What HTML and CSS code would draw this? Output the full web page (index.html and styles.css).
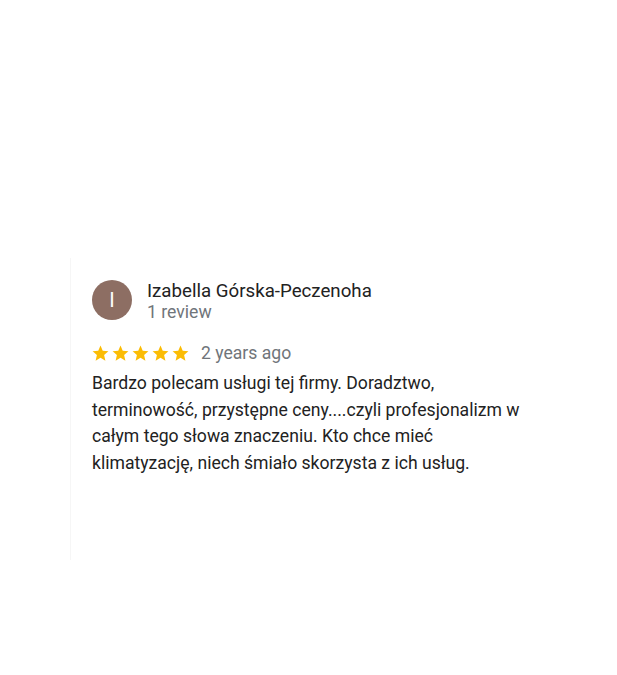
FILE: index.html
```html
<!DOCTYPE html>
<html lang="pl">
<head>
<meta charset="utf-8">
<link rel="stylesheet" href="styles.css">
</head>
<body>
<div class="page">
  <div class="card">
    <div class="author">
      <div class="avatar">I</div>
      <div class="meta">
        <div class="name">Izabella Górska-Peczenoha</div>
        <div class="count">1 review</div>
      </div>
    </div>
    <div class="rating">
      <div class="stars">
        <svg viewBox="0 0 24 24"><path d="M12 17.27L18.18 21l-1.64-7.03L22 9.24l-7.19-.61L12 2 9.19 8.63 2 9.24l5.46 4.73L5.82 21z"/></svg>
        <svg viewBox="0 0 24 24"><path d="M12 17.27L18.18 21l-1.64-7.03L22 9.24l-7.19-.61L12 2 9.19 8.63 2 9.24l5.46 4.73L5.82 21z"/></svg>
        <svg viewBox="0 0 24 24"><path d="M12 17.27L18.18 21l-1.64-7.03L22 9.24l-7.19-.61L12 2 9.19 8.63 2 9.24l5.46 4.73L5.82 21z"/></svg>
        <svg viewBox="0 0 24 24"><path d="M12 17.27L18.18 21l-1.64-7.03L22 9.24l-7.19-.61L12 2 9.19 8.63 2 9.24l5.46 4.73L5.82 21z"/></svg>
        <svg viewBox="0 0 24 24"><path d="M12 17.27L18.18 21l-1.64-7.03L22 9.24l-7.19-.61L12 2 9.19 8.63 2 9.24l5.46 4.73L5.82 21z"/></svg>
      </div>
      <span class="date">2 years ago</span>
    </div>
    <p class="text">Bardzo polecam usługi tej firmy. Doradztwo, terminowość, przystępne ceny....czyli profesjonalizm w całym tego słowa znaczeniu. Kto chce mieć klimatyzację, niech śmiało skorzysta z ich usług.</p>
  </div>
</div>
</body>
</html>
```
FILE: styles.css
```css
html, body {
  margin: 0;
  padding: 0;
  background: #fff;
}
body {
  font-family: Roboto, "Liberation Sans", Arial, sans-serif;
  color: #222;
}
.page {
  width: 617px;
  height: 675px;
  padding: 258px 0 0 70px;
  box-sizing: border-box;
}
.card {
  width: 470px;
  height: 302px;
  border-left: 1px solid #f6f6f6;
  padding: 20px 0 0 21px;
  box-sizing: border-box;
}
.author {
  display: flex;
  align-items: center;
  gap: 15px;
}
.avatar {
  width: 40px;
  height: 40px;
  border-radius: 50%;
  background: #8d6e63;
  color: #fff;
  font-size: 20px;
  display: flex;
  align-items: center;
  justify-content: center;
  flex: none;
}
.meta {
  display: flex;
  flex-direction: column;
  margin-top: 2px;
}
.name {
  font-size: 18.7px;
  line-height: 22px;
  color: #222;
}
.count {
  font-size: 17.6px;
  line-height: 20px;
  color: #70757a;
}
.rating {
  display: flex;
  align-items: center;
  margin-top: 21px;
  gap: 11px;
}
.stars {
  display: flex;
  gap: 1px;
  margin-left: -1px;
}
.stars svg {
  width: 19px;
  height: 19px;
  fill: #fbbc04;
}
.date {
  font-size: 17.6px;
  color: #70757a;
  line-height: 20px;
}
.text {
  margin: 7px 0 0 0;
  width: 440px;
  font-size: 17.6px;
  line-height: 26.6px;
  color: #222;
}
```
